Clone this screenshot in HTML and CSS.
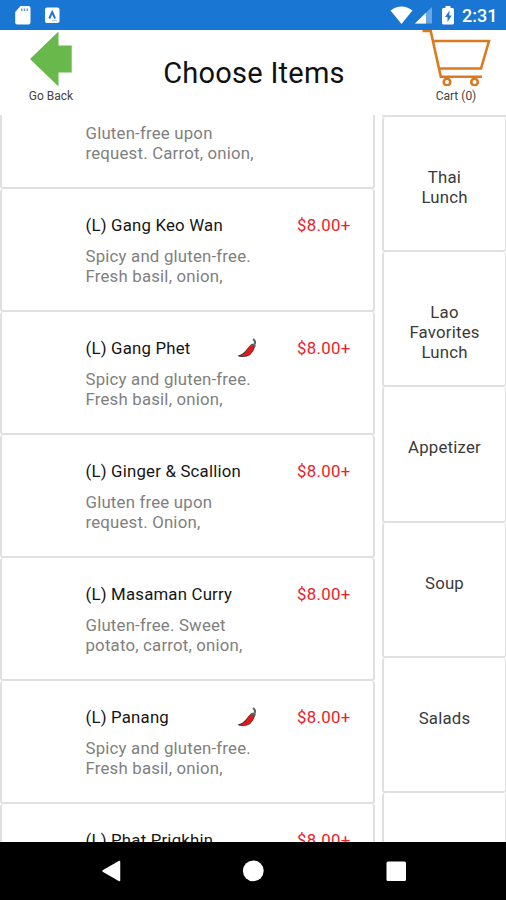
FILE: index.html
```html
<!DOCTYPE html>
<html lang="en">
<head>
<meta charset="utf-8">
<title>Choose Items</title>
<link rel="stylesheet" href="styles.css">
</head>
<body>
<div class="screen">
  <div class="status">
    <svg class="status-left" width="70" height="30" viewBox="0 0 70 30">
      <path fill="#fff" d="M20.500 6H28.500Q30.500 6 30.500 8V22.500Q30.500 24.500 28.500 24.500H17.200Q15.200 24.500 15.200 22.500V12Z"/>
      <path stroke="#5c9fe0" stroke-width="1.500" d="M21.700 8.500v2.500M24.500 8.500v2.500M27.300 8.500v2.500"/>
      <rect x="45" y="7.500" width="14.500" height="15.500" rx="2" fill="#fff"/>
      <path fill="none" stroke="#1976d2" stroke-width="1.900" d="M49.300 18.500l2.900-6.500l2.900 6.500"/>
      <path stroke="#9cc5ec" d="M52 20.700h5"/>
    </svg>
    <svg class="status-right" width="70" height="30" viewBox="388 0 70 30">
      <path fill="#fff" d="M390.500 10.500Q401.500 2.500 412.500 10.500L401.500 24Z"/>
      <path fill="#6aa8e5" d="M415 23.500L432 7V23.500Z"/>
      <path fill="#fff" d="M415 23.500L426 12.800V23.500Z"/>
      <path fill="#fff" d="M445.500 6h5v2h2q1.500 0 1.500 1.500V23q0 1.500-1.500 1.500h-9q-1.500 0-1.500-1.500V9.500Q442 8 443.500 8h2Z"/>
      <path fill="#1976d2" d="M449.500 10.500l-4.500 6.500h2.500v5l4.200-6.500h-2.500Z"/>
    </svg>
    <span class="clock">2:31</span>
  </div>
  <header class="header">
    <div class="back">
      <svg width="44" height="56" viewBox="0 0 44 56"><path fill="#68b84b" d="M1 28L29.500 0.500V14.500H42.700V41.500H29.500V55.500Z"/></svg>
      <span>Go Back</span>
    </div>
    <h1 class="title">Choose Items</h1>
    <div class="cart">
      <svg width="70" height="56" viewBox="421 30 70 56">
        <path fill="none" stroke="#dc7a20" stroke-width="2.600" d="M422.500 31H430.700L440.800 76.700H482M433 41H489L481 68.500H439"/>
        <g fill="none" stroke="#dc7a20" stroke-width="2.600"><circle cx="447" cy="82" r="3.300"/><circle cx="474.500" cy="82" r="3.300"/></g>
      </svg>
      <span>Cart (0)</span>
    </div>
  </header>
  <main class="content">
    <section class="items">
      <article class="item"><div class="row"><span class="name"></span></div><p>Gluten-free upon<br>request. Carrot, onion,</p></article>
      <article class="item"><div class="row"><span class="name">(L) Gang Keo Wan</span><span class="price">$8.00+</span></div><p>Spicy and gluten-free.<br>Fresh basil, onion,</p></article>
      <article class="item"><div class="row"><span class="name">(L) Gang Phet</span><svg class="chili" width="20" height="20" viewBox="0 0 20 20"><path fill="#493b3b" d="M.5 17.500Q6 16.500 10 11Q13 6.500 16 6L18 9Q15 19 6 19Q2 19.300.5 17.500Z"/><path fill="#e11919" d="M3 18Q8 16 11 11Q13 7 15.500 7L17 9Q15 17.500 7 18.300Z"/><path fill="none" stroke="#596563" stroke-width="2" d="M14 7Q16.500 6 18.300 8.500M17 7Q19.500 3.500 16 1"/></svg><span class="price">$8.00+</span></div><p>Spicy and gluten-free.<br>Fresh basil, onion,</p></article>
      <article class="item"><div class="row"><span class="name">(L) Ginger &amp; Scallion</span><span class="price">$8.00+</span></div><p>Gluten free upon<br>request. Onion,</p></article>
      <article class="item"><div class="row"><span class="name">(L) Masaman Curry</span><span class="price">$8.00+</span></div><p>Gluten-free. Sweet<br>potato, carrot, onion,</p></article>
      <article class="item"><div class="row"><span class="name">(L) Panang</span><svg class="chili" width="20" height="20" viewBox="0 0 20 20"><path fill="#493b3b" d="M.5 17.500Q6 16.500 10 11Q13 6.500 16 6L18 9Q15 19 6 19Q2 19.300.5 17.500Z"/><path fill="#e11919" d="M3 18Q8 16 11 11Q13 7 15.500 7L17 9Q15 17.500 7 18.300Z"/><path fill="none" stroke="#596563" stroke-width="2" d="M14 7Q16.500 6 18.300 8.500M17 7Q19.500 3.500 16 1"/></svg><span class="price">$8.00+</span></div><p>Spicy and gluten-free.<br>Fresh basil, onion,</p></article>
      <article class="item"><div class="row"><span class="name">(L) Phat Prigkhin</span><span class="price">$8.00+</span></div></article>
    </section>
    <nav class="categories">
      <div class="category">Thai<br>Lunch</div>
      <div class="category">Lao<br>Favorites<br>Lunch</div>
      <div class="category">Appetizer</div>
      <div class="category">Soup</div>
      <div class="category">Salads</div>
      <div class="category"></div>
    </nav>
  </main>
  <footer class="navbar">
    <svg width="506" height="58" viewBox="0 842 506 58" fill="#fff">
      <path stroke="#fff" stroke-width="1.500" stroke-linejoin="round" d="M103 871L119.500 861.500V880.500Z"/>
      <circle cx="253.300" cy="870.800" r="10.400"/>
      <rect x="386.500" y="861.500" width="19.500" height="19.500" rx="1.500"/>
    </svg>
  </footer>
</div>
</body>
</html>
```

FILE: styles.css
```css
* { box-sizing: border-box; }
body { margin: 0; background: #fff; font-family: Roboto, sans-serif; }
.screen { width: 506px; height: 900px; display: flex; flex-direction: column; overflow: hidden; }
.status { height: 30px; flex: none; background: #1976d2; display: flex; align-items: center; color: #fff; }
.status-right { margin-left: auto; }
.clock { width: 48px; padding-left: 4px; font-size: 18px; font-weight: 500; line-height: 30px; padding-top: 2px; }
.header { height: 85px; flex: none; display: flex; justify-content: space-between; font-size: 12px; line-height: 16px; color: #444; }
.back, .cart { width: 100px; display: flex; flex-direction: column; align-items: center; gap: 2px; }
.back { width: 102px; padding-top: 1px; gap: 1px; }
.title { margin: 0; padding-top: 24px; font-size: 29px; line-height: 38px; font-weight: 400; color: #111; letter-spacing: 0.25px; white-space: nowrap; }
.content { height: 727px; flex: none; display: flex; gap: 7px; overflow: hidden; }
.items { width: 375px; flex: none; margin-top: -49px; }
.item { height: 123px; border: 2px solid #e0e0e0; border-top-width: 0; border-radius: 3px; padding: 24px 0 0 83.500px; }
.row { display: flex; align-items: center; height: 24px; width: 265px; font-size: 16.800px; letter-spacing: 0.2px; color: #151515; white-space: nowrap; }
.price { margin-left: auto; color: #ef2029; letter-spacing: 0.3px; }
.chili { margin-left: auto; }
.chili + .price { margin-left: 40px; }
.item p { margin: 9px 0 0; font-size: 16.800px; line-height: 20px; letter-spacing: 0.2px; color: #808080; white-space: nowrap; }
.categories { width: 124px; flex: none; border-top: 2px solid #e0e0e0; margin-top: -0.500px; }
.category { height: 135.400px; border: 2px solid #e0e0e0; border-top-width: 0; border-right-width: 1px; border-radius: 3px; text-align: center; padding-top: 50px; font-size: 16.800px; line-height: 20px; letter-spacing: 0.2px; color: #3a3a3a; }
.navbar { height: 58px; flex: none; background: #000; }
.navbar svg { display: block; }
```
